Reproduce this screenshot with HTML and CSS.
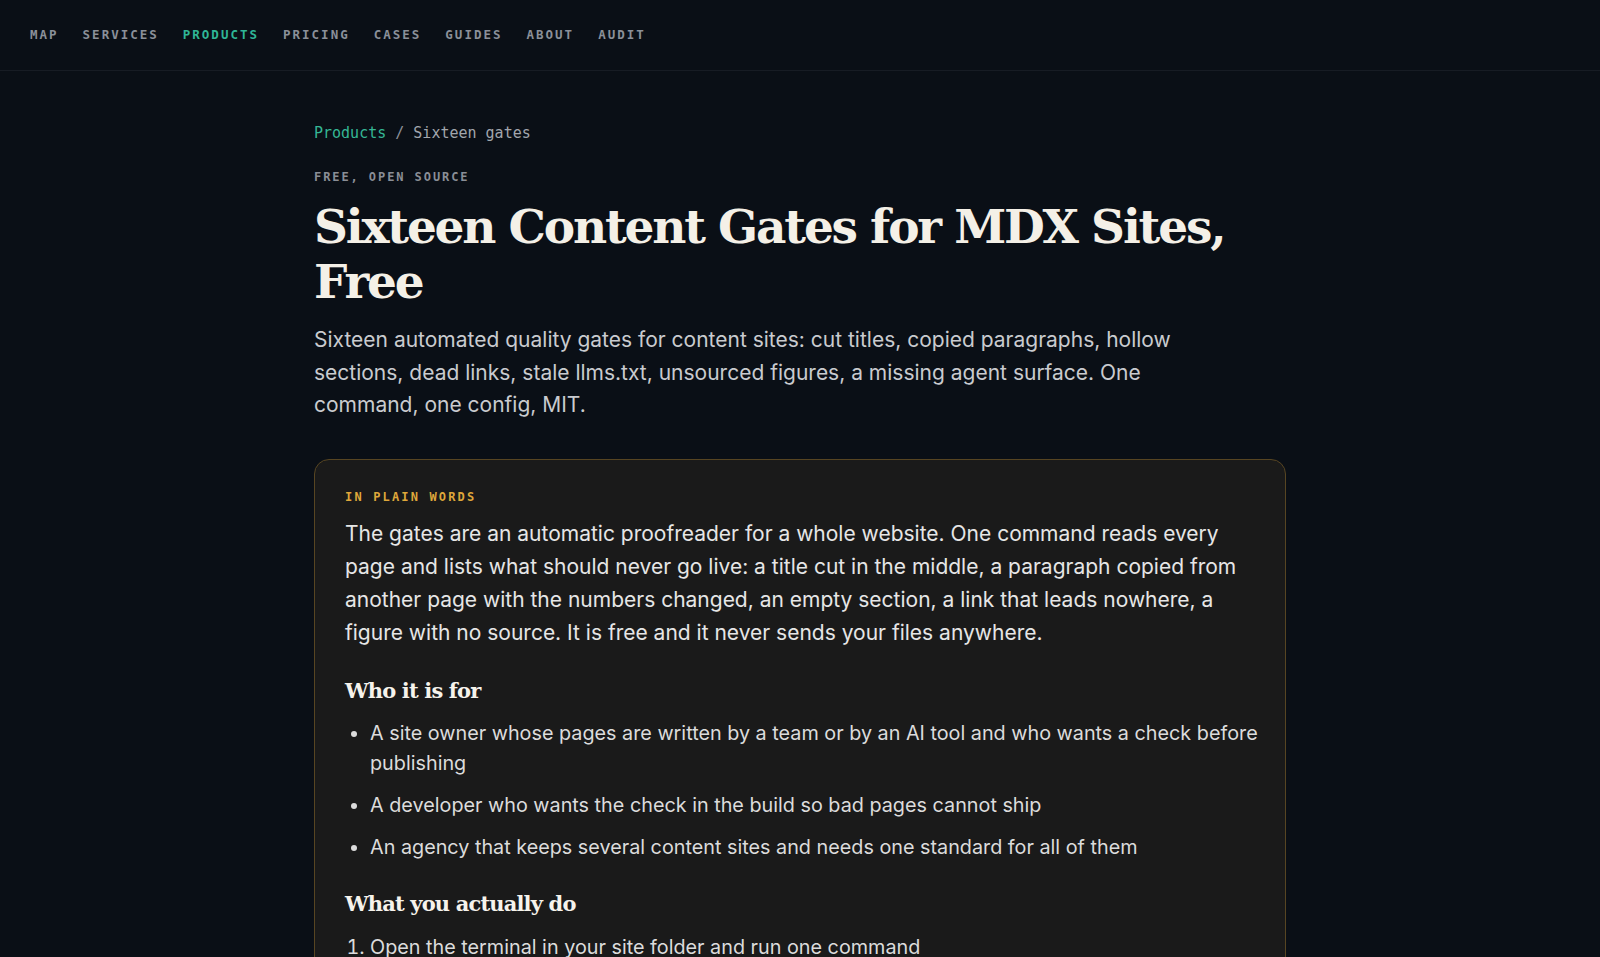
FILE: index.html
```html
<!DOCTYPE html>
<html lang="en">
<head>
<meta charset="utf-8">
<title>Sixteen Content Gates for MDX Sites, Free</title>
<link rel="stylesheet" href="styles.css">
</head>
<body>
<header class="topbar">
  <nav class="nav">
    <a class="nav-link" href="#">MAP</a>
    <a class="nav-link" href="#">SERVICES</a>
    <a class="nav-link is-active" href="#">PRODUCTS</a>
    <a class="nav-link" href="#">PRICING</a>
    <a class="nav-link" href="#">CASES</a>
    <a class="nav-link" href="#">GUIDES</a>
    <a class="nav-link" href="#">ABOUT</a>
    <a class="nav-link" href="#">AUDIT</a>
  </nav>
</header>
<main class="page">
  <div class="crumbs"><a class="crumb-link" href="#">Products</a> <span class="crumb-sep">/</span> <span class="crumb-current">Sixteen gates</span></div>
  <p class="eyebrow">FREE, OPEN SOURCE</p>
  <h1 class="title">Sixteen Content Gates for MDX Sites, Free</h1>
  <p class="lead">Sixteen automated quality gates for content sites: cut titles, copied paragraphs, hollow sections, dead links, stale llms.txt, unsourced figures, a missing agent surface. One command, one config, MIT.</p>
  <section class="plain">
    <p class="plain-label">IN PLAIN WORDS</p>
    <p class="plain-text">The gates are an automatic proofreader for a whole website. One command reads every page and lists what should never go live: a title cut in the middle, a paragraph copied from another page with the numbers changed, an empty section, a link that leads nowhere, a figure with no source. It is free and it never sends your files anywhere.</p>
    <h3 class="plain-head">Who it is for</h3>
    <ul class="plain-list">
      <li>A site owner whose pages are written by a team or by an AI tool and who wants a check before publishing</li>
      <li>A developer who wants the check in the build so bad pages cannot ship</li>
      <li>An agency that keeps several content sites and needs one standard for all of them</li>
    </ul>
    <h3 class="plain-head">What you actually do</h3>
    <ol class="plain-steps">
      <li>Open the terminal in your site folder and run one command</li>
      <li>Read the list of problems the gates found</li>
    </ol>
  </section>
</main>
</body>
</html>
```
FILE: styles.css
```css
html, body {
  margin: 0;
  padding: 0;
}
body {
  background: #0a0f16;
  color: #d6d7d9;
  font-family: Inter, "Noto Sans", sans-serif;
  overflow: hidden;
}
a { text-decoration: none; }

.topbar {
  height: 70px;
  border-bottom: 1px solid #171c24;
  display: flex;
  align-items: center;
  padding: 0 30px;
}
.nav {
  display: flex;
  gap: 24px;
  margin-top: -2px;
}
.nav-link {
  font-family: "DejaVu Sans Mono", monospace;
  font-size: 12.5px;
  font-weight: 700;
  letter-spacing: 0.16em;
  color: #8b9099;
}
.nav-link.is-active { color: #2fb696; }

.page {
  width: 972px;
  margin: 0 auto;
  padding-top: 51px;
}
.crumbs {
  font-family: "DejaVu Sans Mono", monospace;
  font-size: 15px;
  line-height: 22px;
  color: #a2a6ad;
}
.crumb-link { color: #35b795; }
.crumb-sep { color: #8d9199; }

.eyebrow {
  margin: 24px 0 0;
  font-family: "DejaVu Sans Mono", monospace;
  font-size: 12px;
  line-height: 18px;
  font-weight: 700;
  letter-spacing: 0.16em;
  color: #8a8e96;
}
.title {
  margin: 13px 0 0;
  font-family: "DejaVu Serif", serif;
  font-weight: 700;
  font-size: 47px;
  line-height: 55px;
  letter-spacing: -0.046em;
  color: #f4f0e7;
}
.lead {
  margin: 15px 0 0;
  max-width: 890px;
  font-size: 21px;
  line-height: 32.5px;
  color: #c9cbcf;
}

.plain {
  margin-top: 37px;
  background: #1a1a1a;
  border: 1px solid #574522;
  border-radius: 15px;
  padding: 28px 24px 40px 30px;
}
.plain-label {
  margin: 0;
  font-family: "DejaVu Sans Mono", monospace;
  font-size: 12px;
  line-height: 18px;
  font-weight: 700;
  letter-spacing: 0.18em;
  color: #dfa73a;
}
.plain-text {
  margin: 11px 0 0;
  padding-right: 6px;
  font-size: 21px;
  line-height: 33px;
  color: #e6e6e6;
}
.plain-head {
  margin: 27px 0 0;
  font-family: "DejaVu Serif", serif;
  font-size: 21px;
  line-height: 30px;
  font-weight: 700;
  letter-spacing: -0.04em;
  color: #f6f3ec;
}
.plain-list, .plain-steps {
  margin: 0;
  padding-left: 25px;
  font-size: 19.8px;
  line-height: 30px;
  color: #dcdcdc;
}
.plain-list li, .plain-steps li {
  margin-top: 12px;
}
.plain-list li:first-child { margin-top: 12.5px; }
.plain-steps li:first-child { margin-top: 13px; }
```
